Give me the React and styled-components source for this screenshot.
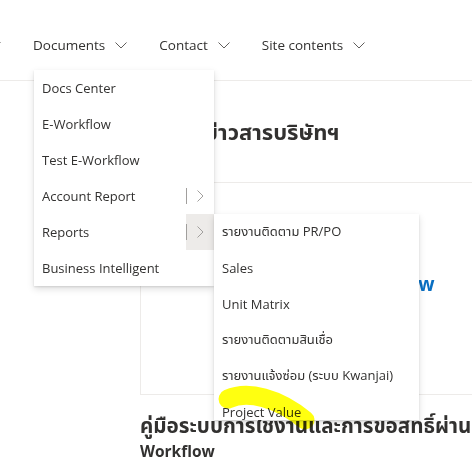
import React from "react";
import styled, { createGlobalStyle } from "styled-components";

const Global = createGlobalStyle`
  html, body { margin: 0; padding: 0; background: #fff; }
  body {
    width: 472px; height: 460px; overflow: hidden; position: relative;
    font-family: "Open Sans", "Noto Sans", "Noto Sans Thai", sans-serif;
    color: #323130;
  }
`;

const Page = styled.div`
  position: relative;
  width: 472px;
  height: 460px;
  overflow: hidden;
`;

const Header = styled.header`
  height: 81px;
  border-bottom: 1px solid #edebe9;
  display: flex;
  align-items: flex-start;
  padding-top: 36px;
  box-sizing: border-box;
`;

const Nav = styled.nav`
  display: flex;
  align-items: center;
  gap: 32px;
  margin-left: -11px;
`;

const NavItem = styled.div`
  display: flex;
  align-items: center;
  gap: 10px;
  font-size: 13.5px;
  line-height: 18px;
  color: #323130;
  white-space: nowrap;
`;

const Main = styled.main`
  padding-left: 140px;
  width: 380px;
  display: flex;
  flex-direction: column;
`;

const SectionTitle = styled.h2`
  margin: 36px 0 0;
  font-size: 22px;
  font-weight: 700;
  line-height: 28px;
  white-space: nowrap;
  text-indent: -6px;
  color: #323130;
`;

const Card = styled.div`
  margin-top: 37px;
  height: 213px;
  border: 1px solid #edebe9;
  border-right: none;
  display: flex;
  align-items: center;
  padding-left: 185px;
  box-sizing: border-box;
`;

const CardLink = styled.span`
  font-size: 19px;
  font-weight: 700;
  color: #0a6fc2;
  white-space: nowrap;
  margin-top: -9px;
`;

const DocTitle = styled.h3`
  margin: 18px 0 0;
  font-size: 15.5px;
  font-weight: 700;
  line-height: 24px;
  color: #323130;
`;

const ThaiRun = styled.span`
  font-size: 20.6px;
`;

const Menu = styled.div`
  position: absolute;
  left: ${(p) => p.$left}px;
  top: ${(p) => p.$top}px;
  width: ${(p) => p.$width}px;
  ${(p) => (p.$height ? `height: ${p.$height}px; overflow: hidden;` : "")}
  background: #fff;
  box-shadow: 0 3.2px 7.2px rgba(0, 0, 0, 0.13), 0 0.6px 1.8px rgba(0, 0, 0, 0.11);
  display: flex;
  flex-direction: column;
  z-index: ${(p) => p.$z || 10};
`;

const MenuItem = styled.div`
  height: 36px;
  flex: 0 0 36px;
  display: flex;
  align-items: center;
  font-size: 13px;
  color: #323130;
  white-space: nowrap;
`;

const ItemLabel = styled.span`
  flex: 1;
  padding-left: 8px;
`;

const SplitButton = styled.span`
  align-self: stretch;
  width: 28px;
  display: flex;
  align-items: center;
  justify-content: center;
  position: relative;
  background: ${(p) => (p.$active ? "#edebe9" : "transparent")};
  &::before {
    content: "";
    position: absolute;
    left: 0;
    top: 10px;
    bottom: 10px;
    width: 1px;
    background: #a19f9d;
  }
`;

const Highlight = styled.svg`
  position: absolute;
  left: 0;
  top: 0;
  width: 472px;
  height: 460px;
  pointer-events: none;
  mix-blend-mode: multiply;
  z-index: 30;
`;

const ChevronDown = () => (
  <svg width="12" height="7" viewBox="0 0 12 7" fill="none">
    <path d="M0.5 0.5 L6 6 L11.5 0.5" stroke="#605e5c" strokeWidth="1" />
  </svg>
);

const ChevronRight = () => (
  <svg width="7" height="12" viewBox="0 0 7 12" fill="none">
    <path d="M0.5 0.5 L6 6 L0.5 11.5" stroke="#a19f9d" strokeWidth="1" />
  </svg>
);

const mainMenu = [
  { label: "Docs Center" },
  { label: "E-Workflow" },
  { label: "Test E-Workflow" },
  { label: "Account Report", sub: true },
  { label: "Reports", sub: true, active: true },
  { label: "Business Intelligent" },
];

const subMenu = [
  "รายงานติดตาม PR/PO",
  "Sales",
  "Unit Matrix",
  "รายงานติดตามสินเชื่อ",
  "รายงานแจ้งซ่อม (ระบบ Kwanjai)",
  "Project Value",
];

export default function App() {
  return (
    <Page>
      <Global />
      <Header>
        <Nav>
          <ChevronDown />
          <NavItem>
            Documents <ChevronDown />
          </NavItem>
          <NavItem>
            Contact <ChevronDown />
          </NavItem>
          <NavItem>
            Site contents <ChevronDown />
          </NavItem>
        </Nav>
      </Header>
      <Main>
        <SectionTitle>ประกาศข่าวสารบริษัทฯ</SectionTitle>
        <Card>
          <CardLink>E-Workflow</CardLink>
        </Card>
        <DocTitle>
          <ThaiRun>คู่มือระบบการใช้งานและการขอสิทธิ์ผ่าน</ThaiRun> E-Workflow
        </DocTitle>
      </Main>

      <Menu $left={34} $top={70} $width={180}>
        {mainMenu.map((m) => (
          <MenuItem key={m.label}>
            <ItemLabel>{m.label}</ItemLabel>
            {m.sub && (
              <SplitButton $active={m.active}>
                <ChevronRight />
              </SplitButton>
            )}
          </MenuItem>
        ))}
      </Menu>

      <Menu $left={214} $top={214} $width={205} $height={206} $z={11}>
        {subMenu.map((s) => (
          <MenuItem key={s}>
            <ItemLabel>{s}</ItemLabel>
          </MenuItem>
        ))}
      </Menu>

      <Highlight viewBox="0 0 472 460">
        <path
          d="M228 399 C248 390, 278 398, 305 420"
          stroke="#ffff10"
          strokeWidth="19"
          strokeLinecap="round"
          fill="none"
        />
      </Highlight>
    </Page>
  );
}
